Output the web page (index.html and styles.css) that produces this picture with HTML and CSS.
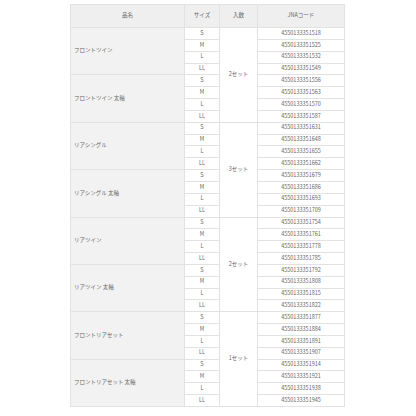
FILE: index.html
```html
<!DOCTYPE html>
<html lang="ja">
<head>
<meta charset="utf-8">
<link rel="stylesheet" href="styles.css">
</head>
<body>
<div class="wrap">
<table class="spec">
<colgroup><col class="c-name"><col class="c-size"><col class="c-qty"><col class="c-code"></colgroup>
<thead>
<tr><th>品名</th><th>サイズ</th><th>入数</th><th>JNAコード</th></tr>
</thead>
<tbody>
<tr><td class="name" rowspan="4">フロントツイン</td><td>S</td><td class="qty" rowspan="8">2セット</td><td>4550133351518</td></tr>
<tr><td>M</td><td>4550133351525</td></tr>
<tr><td>L</td><td>4550133351532</td></tr>
<tr><td>LL</td><td>4550133351549</td></tr>
<tr><td class="name" rowspan="4">フロントツイン 太軸</td><td>S</td><td>4550133351556</td></tr>
<tr><td>M</td><td>4550133351563</td></tr>
<tr><td>L</td><td>4550133351570</td></tr>
<tr><td>LL</td><td>4550133351587</td></tr>
<tr><td class="name" rowspan="4">リアシングル</td><td>S</td><td class="qty" rowspan="8">3セット</td><td>4550133351631</td></tr>
<tr><td>M</td><td>4550133351648</td></tr>
<tr><td>L</td><td>4550133351655</td></tr>
<tr><td>LL</td><td>4550133351662</td></tr>
<tr><td class="name" rowspan="4">リアシングル 太軸</td><td>S</td><td>4550133351679</td></tr>
<tr><td>M</td><td>4550133351686</td></tr>
<tr><td>L</td><td>4550133351693</td></tr>
<tr><td>LL</td><td>4550133351709</td></tr>
<tr><td class="name" rowspan="4">リアツイン</td><td>S</td><td class="qty" rowspan="8">2セット</td><td>4550133351754</td></tr>
<tr><td>M</td><td>4550133351761</td></tr>
<tr><td>L</td><td>4550133351778</td></tr>
<tr><td>LL</td><td>4550133351785</td></tr>
<tr><td class="name" rowspan="4">リアツイン 太軸</td><td>S</td><td>4550133351792</td></tr>
<tr><td>M</td><td>4550133351808</td></tr>
<tr><td>L</td><td>4550133351815</td></tr>
<tr><td>LL</td><td>4550133351822</td></tr>
<tr><td class="name" rowspan="4">フロントリアセット</td><td>S</td><td class="qty" rowspan="8">1セット</td><td>4550133351877</td></tr>
<tr><td>M</td><td>4550133351884</td></tr>
<tr><td>L</td><td>4550133351891</td></tr>
<tr><td>LL</td><td>4550133351907</td></tr>
<tr><td class="name" rowspan="4">フロントリアセット 太軸</td><td>S</td><td>4550133351914</td></tr>
<tr><td>M</td><td>4550133351921</td></tr>
<tr><td>L</td><td>4550133351938</td></tr>
<tr><td>LL</td><td>4550133351945</td></tr>
</tbody>
</table>
</div>
</body>
</html>
```
FILE: styles.css
```css
html, body {
  margin: 0;
  padding: 0;
  background: #ffffff;
}
.wrap {
  padding: 4px 0 0 70px;
}
.spec {
  border-collapse: collapse;
  table-layout: fixed;
  width: 274px;
  font-family: "Noto Sans CJK JP", "Noto Sans", sans-serif;
  font-size: 5.5px;
  color: #666666;
}
.c-name { width: 114px; }
.c-size { width: 35px; }
.c-qty { width: 38px; }
.c-code { width: 87px; }
.spec th, .spec td {
  border: 1px solid #e2e2e2;
  padding: 0;
  text-align: center;
  vertical-align: middle;
  line-height: 1;
  font-weight: normal;
}
.spec thead th {
  background: #efefef;
  height: 22px;
}
.spec tbody td {
  height: 10.85px;
}
.spec td.name {
  background: #f2f2f2;
  text-align: left;
  padding-left: 3px;
}
.spec td.qty {
  background: #ffffff;
}
```
